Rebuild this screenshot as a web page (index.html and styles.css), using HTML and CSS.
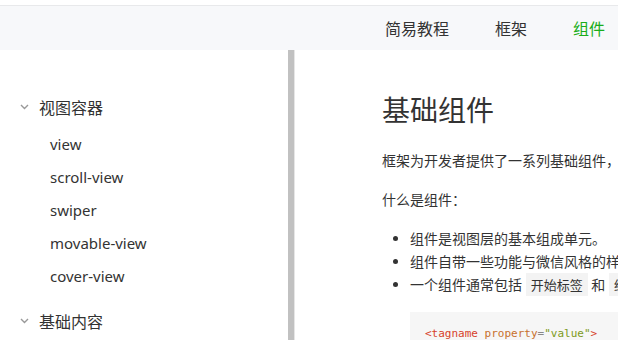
FILE: index.html
```html
<!DOCTYPE html>
<html lang="zh-CN">
<head>
    <meta charset="UTF-8">
    <meta name="viewport" content="width=device-width, initial-scale=1.0">
    <title>基础组件</title>
    <link rel="stylesheet" href="styles.css">
</head>

<body>
    <div class="header">
        <div class="nav">
            <a href="#" class="nav-item">简易教程</a>
            <a href="#" class="nav-item">框架</a>
            <a href="#" class="nav-item active">组件</a>
        </div>
    </div>

    <div class="main">
        <!-- 左侧菜单 -->
        <div class="sidebar">
            <div class="group">
                <div class="group-title">
                    <svg class="arrow" width="9" height="6" viewBox="0 0 9 6"><path d="M1 1 L4.5 4.5 L8 1" fill="none" stroke="#999" stroke-width="1.4"/></svg>
                    <span>视图容器</span>
                </div>
                <ul class="menu">
                    <li>view</li>
                    <li>scroll-view</li>
                    <li>swiper</li>
                    <li>movable-view</li>
                    <li>cover-view</li>
                </ul>
            </div>
            <div class="group">
                <div class="group-title">
                    <svg class="arrow" width="9" height="6" viewBox="0 0 9 6"><path d="M1 1 L4.5 4.5 L8 1" fill="none" stroke="#999" stroke-width="1.4"/></svg>
                    <span>基础内容</span>
                </div>
            </div>
        </div>
        <div class="scrollbar"></div>

        <!-- 正文 -->
        <div class="content">
            <h1>基础组件</h1>
            <p>框架为开发者提供了一系列基础组件，开发者可以通过组合这些基础组件进行快速开发。</p>
            <p>什么是组件：</p>
            <ul class="list">
                <li>组件是视图层的基本组成单元。</li>
                <li>组件自带一些功能与微信风格的样式。</li>
                <li>一个组件通常包括 <code>开始标签</code> 和 <code>结束标签</code>，属性用来修饰这个组件，内容在两个标签之内。</li>
            </ul>
            <pre class="code"><span class="tag">&lt;tagname</span> <span class="attr">property</span><span class="eq">=</span><span class="val">"value"</span><span class="tag">&gt;</span></pre>
        </div>
    </div>
</body>

</html>
```

FILE: styles.css
```css
* {
    margin: 0;
    padding: 0;
}

body {
    font-family: "Noto Sans", "Noto Sans CJK SC", sans-serif;
    color: #333;
    background-color: #fff;
    overflow: hidden;
}

.header {
    margin-top: 5px;
    border-top: 1px solid #e8e9eb;
    background-color: #f7f8fa;
}

.nav {
    height: 44px;
    display: flex;
    justify-content: flex-end;
    align-items: center;
    gap: 46px;
    padding-right: 13px;
}

.nav-item {
    font-size: 16px;
    color: #333;
    text-decoration: none;
}

.nav-item.active {
    color: #1aad19;
}

.main {
    display: flex;
    height: 290px;
}

/* 左侧菜单 */
.sidebar {
    width: 288px;
    flex-shrink: 0;
    padding-top: 40px;
    box-sizing: border-box;
}

.group {
    margin-bottom: 11px;
}

.group-title {
    display: flex;
    align-items: center;
    height: 33px;
    padding-left: 20px;
    font-size: 16px;
}

.arrow {
    margin-right: 10px;
}

.menu {
    list-style: none;
    margin-top: 5px;
}

.menu li {
    height: 33px;
    line-height: 33px;
    padding-left: 50px;
    font-size: 15px;
}

.scrollbar {
    width: 6px;
    flex-shrink: 0;
    background-color: #c1c1c1;
    border-right: 1px solid #e6e6e6;
}

/* 正文 */
.content {
    flex: 1;
    min-width: 0;
    padding: 40px 0 0 87px;
    white-space: nowrap;
    overflow: hidden;
}

h1 {
    font-size: 28px;
    font-weight: normal;
    line-height: 40px;
    margin-bottom: 20px;
}

p {
    font-size: 14px;
    line-height: 22px;
    margin-bottom: 17px;
}

.list {
    padding-left: 28px;
    font-size: 14px;
    margin-top: -1px;
}

.list li {
    line-height: 23px;
}

.list li:last-child {
    line-height: 24px;
}

code {
    font-family: "Noto Sans CJK SC", sans-serif;
    font-size: 13px;
    background-color: #f3f3f3;
    padding: 2px 5px;
}

.code {
    margin: 15px 0 0 28px;
    padding: 12px 15px;
    background-color: #f6f6f6;
    font-family: "DejaVu Sans Mono", monospace;
    font-size: 11px;
    line-height: 20px;
}

.tag {
    color: #d6422b;
}

.attr {
    color: #c8712e;
}

.eq {
    color: #888;
}

.val {
    color: #7d9a22;
}
```
